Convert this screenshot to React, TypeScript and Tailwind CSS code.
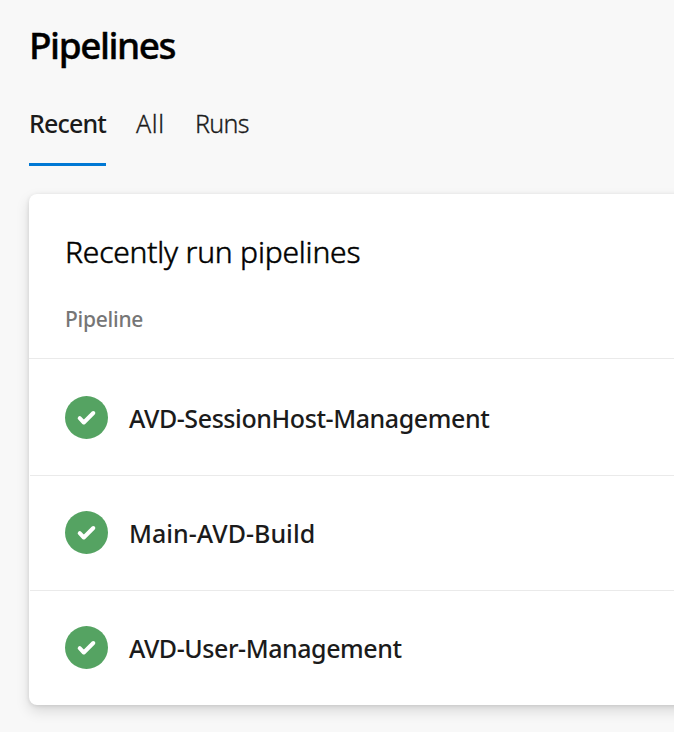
const pipelines = [
  { name: "AVD-SessionHost-Management", row: "h-[117px] pt-[37px]", tracking: "tracking-[-0.42px]" },
  { name: "Main-AVD-Build", row: "h-[115px] pt-[35px]", tracking: "tracking-[0.03px]" },
  { name: "AVD-User-Management", row: "h-[115px] pt-[35px]", tracking: "tracking-[-0.44px]" },
];

function SuccessIcon() {
  return (
    <svg className="size-[43px] shrink-0" viewBox="0 0 43 43" fill="none" aria-label="Success">
      <circle cx="21.5" cy="21.5" r="21.5" fill="#55a362" />
      <path
        d="M14.7 22.2 L18.8 26.5 L28.3 17"
        stroke="#fff"
        strokeWidth="4"
        strokeLinecap="round"
        strokeLinejoin="round"
      />
    </svg>
  );
}

export default function App() {
  return (
    <main className="h-[732px] w-full overflow-hidden bg-[#f8f8f8] pt-[21px] pl-[29px] font-['Noto_Sans','Open_Sans',sans-serif] whitespace-nowrap text-[#1b1b1b]">
      <h1 className="h-12 text-[37px] leading-[48px] font-medium tracking-[-1.45px] text-black [-webkit-text-stroke:0.4px_black]">
        Pipelines
      </h1>

      <nav className="mt-[37px] flex h-[60px] gap-[30px] text-[25px] leading-[34px]">
        <span className="w-[77px] border-b-[3px] border-[#0078d4] font-medium tracking-[-0.85px]">
          Recent
        </span>
        <span className="w-[29px] font-light tracking-[0.6px] [-webkit-text-stroke:0.3px_#1b1b1b]">All</span>
        <span className="font-light tracking-[-0.65px] [-webkit-text-stroke:0.3px_#1b1b1b]">Runs</span>
      </nav>

      <section className="mt-7 h-[511px] w-[700px] rounded-lg bg-white shadow-[0_6px_14px_0_rgba(0,0,0,0.13),0_1px_4px_0_rgba(0,0,0,0.11)]">
        <header className="h-[165px] border-b border-[#eaeaea] pt-[38px] pl-9">
          <h2 className="h-10 text-[30px] leading-10 font-light tracking-[-0.2px] text-black [-webkit-text-stroke:0.5px_black]">
            Recently run pipelines
          </h2>
          <div className="mt-8 h-[30px] text-[21px] leading-[30px] font-medium tracking-[-0.25px] text-[#767676]">
            Pipeline
          </div>
        </header>
        <ul className="ml-px">
          {pipelines.map((p) => (
            <li
              key={p.name}
              className={`flex items-start gap-[21px] border-b border-[#eaeaea] pl-[35px] last:border-b-0 ${p.row}`}
            >
              <SuccessIcon />
              <span className={`pt-[5px] text-[25px] leading-[34px] font-medium ${p.tracking}`}>
                {p.name}
              </span>
            </li>
          ))}
        </ul>
      </section>
    </main>
  );
}
